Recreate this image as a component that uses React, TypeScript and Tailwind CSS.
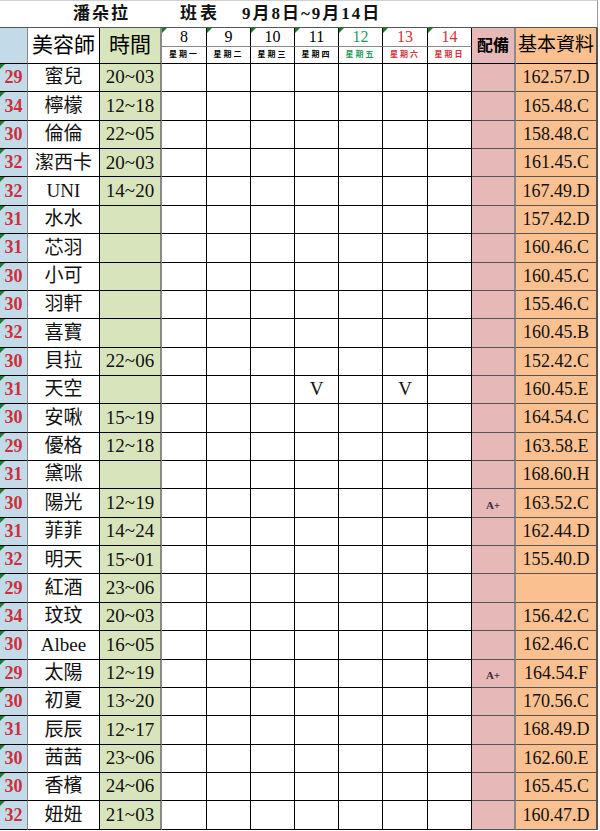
import React from "react";

const serif = "font-['Liberation_Serif','Noto_Sans_CJK_TC',serif]";

type Row = [string, string, string, string];

const rows: Row[] = [
  ["29", "蜜兒", "20~03", "162.57.D"],
  ["34", "檸檬", "12~18", "165.48.C"],
  ["30", "倫倫", "22~05", "158.48.C"],
  ["32", "潔西卡", "20~03", "161.45.C"],
  ["32", "UNI", "14~20", "167.49.D"],
  ["31", "水水", "", "157.42.D"],
  ["31", "芯羽", "", "160.46.C"],
  ["30", "小可", "", "160.45.C"],
  ["30", "羽軒", "", "155.46.C"],
  ["32", "喜寶", "", "160.45.B"],
  ["30", "貝拉", "22~06", "152.42.C"],
  ["31", "天空", "", "160.45.E"],
  ["30", "安啾", "15~19", "164.54.C"],
  ["29", "優格", "12~18", "163.58.E"],
  ["31", "黛咪", "", "168.60.H"],
  ["30", "陽光", "12~19", "163.52.C"],
  ["31", "菲菲", "14~24", "162.44.D"],
  ["32", "明天", "15~01", "155.40.D"],
  ["29", "紅酒", "23~06", ""],
  ["34", "玟玟", "20~03", "156.42.C"],
  ["30", "Albee", "16~05", "162.46.C"],
  ["29", "太陽", "12~19", "164.54.F"],
  ["30", "初夏", "13~20", "170.56.C"],
  ["31", "辰辰", "12~17", "168.49.D"],
  ["30", "茜茜", "23~06", "162.60.E"],
  ["30", "香檳", "24~06", "165.45.C"],
  ["32", "妞妞", "21~03", "160.47.D"],
];

// day header: number, weekday label, colour
const days = [
  { d: "8", w: "星期一", c: "text-black" },
  { d: "9", w: "星期二", c: "text-black" },
  { d: "10", w: "星期三", c: "text-black" },
  { d: "11", w: "星期四", c: "text-black" },
  { d: "12", w: "星期五", c: "text-[#1f9a5c]" },
  { d: "13", w: "星期六", c: "text-[#d0333a]" },
  { d: "14", w: "星期日", c: "text-[#d0333a]" },
];

// cells marked with V: [row index, day index]
const marks: Record<string, boolean> = { "11-3": true, "11-5": true };
const gear: Record<number, string> = { 15: "A+", 21: "A+" };

function Flag() {
  return (
    <span className="absolute left-0 top-0 w-0 h-0 border-t-[5px] border-r-[5px] border-t-[#1d7a2a] border-r-transparent" />
  );
}

export default function App() {
  return (
    <div className={`w-[600px] h-[831px] bg-white overflow-hidden ${serif}`}>
      <div className="grid grid-cols-[28px_72px_62px_45px_44px_44px_44px_44px_45px_44px_44px_82px] grid-rows-[28px_19px_17px_repeat(27,28.37px)]">
        {/* title */}
        <div className="col-span-12 flex items-center border-t border-r border-b border-t-[#d0d0d0] border-r-[#9a9a9a] border-b-[#555] text-[17px] font-bold text-[#111]">
          <span className="ml-[73px] tracking-[2px]">潘朵拉</span>
          <span className="ml-[50px] tracking-[3px]">班表</span>
          <span className="ml-[22px] tracking-[2px]">9月8日~9月14日</span>
        </div>

        {/* header */}
        <div className="row-span-2 bg-[#c3dbe9] border-r border-b border-r-[#8a8a8a] border-b-black" />
        <div className="row-span-2 flex items-center justify-center border-r border-b border-black text-[21px]">
          美容師
        </div>
        <div className="row-span-2 flex items-center justify-center bg-[#d8e4bc] border-r-2 border-b border-r-[#8a8a8a] border-b-black text-[21px]">
          時間
        </div>
        {days.map((x) => (
          <div
            key={x.d}
            className={`relative flex items-center justify-center border-r border-b border-r-black border-b-[#8a8a8a] text-[16px] leading-none ${x.c}`}
          >
            <Flag />
            {x.d}
          </div>
        ))}
        <div className="row-span-2 flex items-center justify-center bg-[#e6b9b8] border-r-2 border-b border-r-[#8a8a8a] border-b-black text-[16px] font-bold">
          配備
        </div>
        <div className="row-span-2 flex items-center justify-center bg-[#fac08f] border-r-2 border-b border-r-[#555] border-b-black text-[19px]">
          基本資料
        </div>
        {days.map((x) => (
          <div
            key={x.w}
            className={`flex items-center justify-center border-r border-b border-black text-[8px] font-bold tracking-[2px] leading-none ${x.c}`}
          >
            {x.w}
          </div>
        ))}

        {/* body */}
        {rows.map((r, i) => (
          <React.Fragment key={i}>
            <div className="relative flex items-center justify-center bg-[#c3dbe9] border-r border-b border-r-[#8a8a8a] border-b-black text-[18px] font-bold text-[#cc2f3a]">
              <Flag />
              {r[0]}
            </div>
            <div className="flex items-center justify-center border-r border-b border-black text-[19px] text-[#111]">
              {r[1]}
            </div>
            <div className="flex items-center justify-center bg-[#d8e4bc] border-r-2 border-b border-r-[#8a8a8a] border-b-black text-[19px] text-[#111]">
              {r[2]}
            </div>
            {days.map((_, j) => (
              <div
                key={j}
                className="flex items-center justify-center border-r border-b border-black text-[19px] text-[#111]"
              >
                {marks[`${i}-${j}`] ? "V" : ""}
              </div>
            ))}
            <div className="flex items-end justify-center pb-[3px] bg-[#e6b9b8] border-r-2 border-b border-r-[#8a8a8a] border-b-[#555] text-[11px] font-bold text-[#3a2840]">
              {gear[i] ?? ""}
            </div>
            <div className="flex items-center justify-center bg-[#fac08f] border-r-2 border-b border-r-[#555] border-b-[#555] text-[18px] text-[#111]">
              {r[3]}
            </div>
          </React.Fragment>
        ))}
      </div>
    </div>
  );
}
